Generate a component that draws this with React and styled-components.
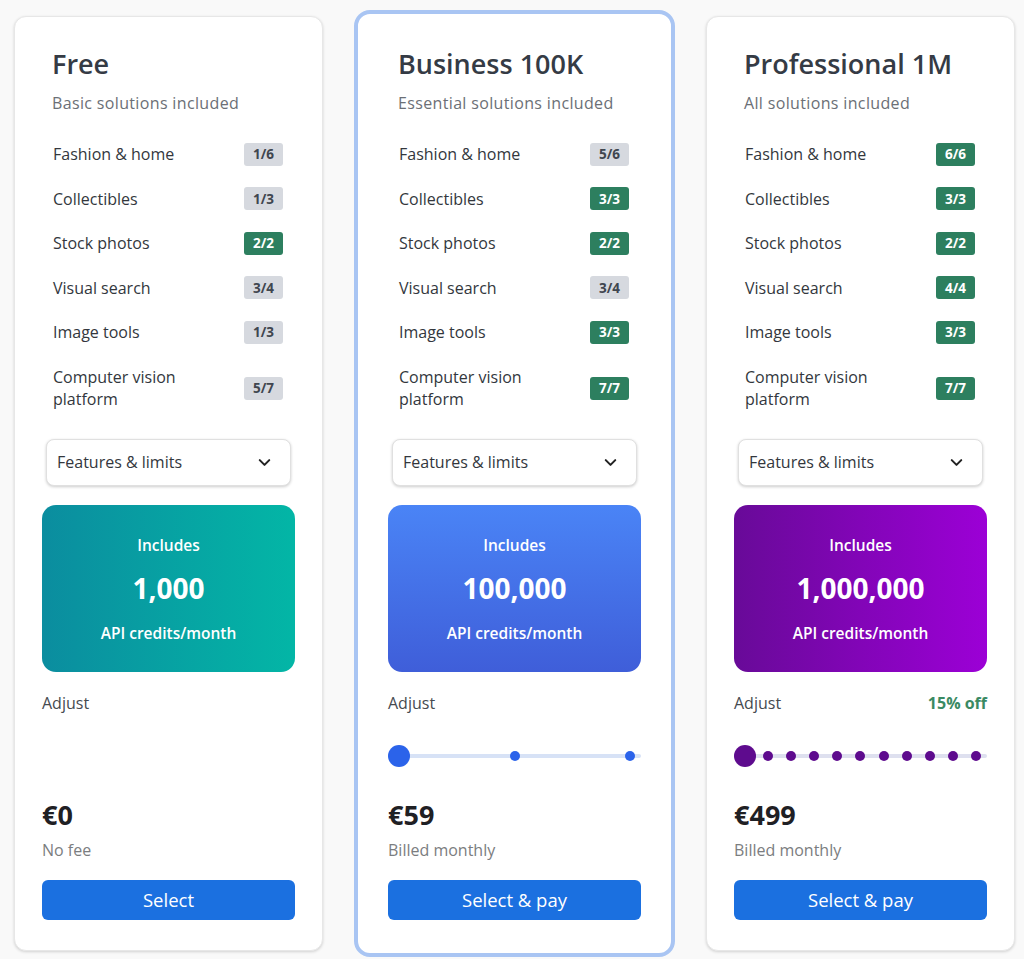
import React from "react";
import styled, { createGlobalStyle } from "styled-components";
import { ChevronDown } from "lucide-react";

const Global = createGlobalStyle`
  html, body { margin: 0; padding: 0; background: #f9f9f9; }
  body { font-family: "Open Sans", "Noto Sans", sans-serif; color: #33373d; }
  * { box-sizing: border-box; }
`;

const Page = styled.div`
  display: grid;
  grid-template-columns: repeat(3, 309px);
  column-gap: 37px;
  padding: 16px 0 10px 14px;
  align-items: stretch;
`;

const Card = styled.div`
  background: #fff;
  border-radius: ${(p) => (p.$selected ? "16px" : "12px")};
  border: ${(p) => (p.$selected ? "4px solid #a9c5f3" : "1px solid #e7e7e7")};
  box-shadow: ${(p) => (p.$selected ? "none" : "0 1px 3px rgba(0,0,0,0.16)")};
  margin: ${(p) => (p.$selected ? "-6px" : "0")};
  padding: ${(p) => (p.$selected ? "31px 30px 33px" : "28px 27px 27px")};
  display: flex;
  flex-direction: column;
`;

const Header = styled.div`
  padding: 1px 10px 0;
`;

const Title = styled.h2`
  margin: 0;
  font-size: 27px;
  line-height: 36px;
  font-weight: 650;
  color: #353b45;
`;

const Subtitle = styled.div`
  margin-top: 10px;
  font-size: 16px;
  line-height: 22px;
  letter-spacing: 0.35px;
  color: #6b6f76;
`;

const Features = styled.ul`
  list-style: none;
  margin: 18px 12px 0 11px;
  padding: 0;
`;

const Feature = styled.li`
  display: flex;
  align-items: center;
  justify-content: space-between;
  gap: 16px;
  padding: 11px 0;
  font-size: 16px;
  line-height: 22.5px;
  font-weight: 500;
  color: #33373d;
  &:not(:last-child) {
    height: 44.5px;
  }
`;

const FeatureName = styled.span`
  max-width: ${(p) => (p.$wrap ? "150px" : "none")};
`;

const Badge = styled.span`
  flex: none;
  width: 39px;
  height: 23px;
  border-radius: 3px;
  display: flex;
  align-items: center;
  justify-content: center;
  font-size: 13.5px;
  font-weight: 700;
  background: ${(p) => (p.$full ? "#2d7f5f" : "#d6d9df")};
  color: ${(p) => (p.$full ? "#fff" : "#40464f")};
`;

const Dropdown = styled.button`
  margin: 17px 4px 0;
  height: 47px;
  display: flex;
  align-items: center;
  justify-content: space-between;
  padding: 0 16px 0 10px;
  background: #fff;
  border: 1px solid #e0e0e0;
  border-radius: 8px;
  box-shadow: 0 1px 3px rgba(0, 0, 0, 0.2);
  font-family: inherit;
  font-size: 16px;
  font-weight: 500;
  color: #33373d;
  cursor: pointer;
`;

const Credits = styled.div`
  margin-top: 19px;
  height: 167px;
  border-radius: 14px;
  background: ${(p) => p.$bg};
  color: #fff;
  display: flex;
  flex-direction: column;
  align-items: center;
  padding-top: 29px;
`;

const CreditsLabel = styled.div`
  margin-top: ${(p) => p.$gap || 0}px;
  font-size: 15.5px;
  line-height: 22px;
  font-weight: 600;
`;

const CreditsNumber = styled.div`
  margin-top: 14px;
  font-size: 28px;
  line-height: 36px;
  font-weight: 700;
`;

const AdjustRow = styled.div`
  margin-top: 20px;
  display: flex;
  justify-content: space-between;
  align-items: center;
  font-size: 16px;
  line-height: 22px;
  color: #464a50;
`;

const Discount = styled.span`
  color: #3a8a63;
  font-weight: 700;
`;

const SliderArea = styled.div`
  margin-top: 22px;
  height: 40px;
  display: flex;
  align-items: center;
`;

const Track = styled.div`
  position: relative;
  flex: 1;
  height: 22px;
  display: flex;
  justify-content: space-between;
  align-items: center;
  &::before {
    content: "";
    position: absolute;
    left: 0;
    right: 0;
    top: 9px;
    height: 4px;
    border-radius: 2px;
    background: ${(p) => p.$track};
  }
`;

const Stop = styled.span`
  position: relative;
  width: 22px;
  height: 22px;
  display: flex;
  align-items: center;
  justify-content: center;
  &::after {
    content: "";
    width: ${(p) => (p.$thumb ? "22px" : "10px")};
    height: ${(p) => (p.$thumb ? "22px" : "10px")};
    border-radius: 50%;
    background: ${(p) => p.$color};
  }
`;

const Price = styled.div`
  margin-top: 21px;
  font-size: 27px;
  line-height: 36px;
  font-weight: 700;
  color: #1f2024;
`;

const Billing = styled.div`
  margin-top: 6px;
  font-size: 16px;
  line-height: 22px;
  color: #7b7d80;
`;

const SelectButton = styled.button`
  margin-top: 19px;
  height: 40px;
  border: none;
  border-radius: 6px;
  background: #1b70e0;
  color: #fff;
  font-family: inherit;
  font-size: 18.5px;
  font-weight: 500;
  cursor: pointer;
`;

const plans = [
  {
    name: "Free",
    subtitle: "Basic solutions included",
    features: ["1/6", "1/3", "2/2", "3/4", "1/3", "5/7"],
    credits: "1,000",
    bg: "linear-gradient(90deg, #0b8d9f 0%, #03b6a6 100%)",
    slider: null,
    price: "€0",
    billing: "No fee",
    button: "Select",
  },
  {
    name: "Business 100K",
    subtitle: "Essential solutions included",
    features: ["5/6", "3/3", "2/2", "3/4", "3/3", "7/7"],
    credits: "100,000",
    bg: "linear-gradient(180deg, #4a84f6 0%, #3f5ed9 100%)",
    slider: { stops: 3, color: "#2b63ea", track: "#d7e2f6" },
    price: "€59",
    billing: "Billed monthly",
    button: "Select & pay",
    selected: true,
  },
  {
    name: "Professional 1M",
    subtitle: "All solutions included",
    features: ["6/6", "3/3", "2/2", "4/4", "3/3", "7/7"],
    credits: "1,000,000",
    bg: "linear-gradient(90deg, #680a98 0%, #9c00d6 100%)",
    slider: { stops: 11, color: "#5e0b8e", track: "#dee0ef" },
    discount: "15% off",
    price: "€499",
    billing: "Billed monthly",
    button: "Select & pay",
  },
];

const featureNames = [
  "Fashion & home",
  "Collectibles",
  "Stock photos",
  "Visual search",
  "Image tools",
  "Computer vision platform",
];

const isFull = (v) => {
  const [a, b] = v.split("/");
  return a === b;
};

function PlanCard({ plan }) {
  return (
    <Card $selected={plan.selected}>
      <Header>
        <Title>{plan.name}</Title>
        <Subtitle>{plan.subtitle}</Subtitle>
      </Header>
      <Features>
        {featureNames.map((n, i) => (
          <Feature key={n}>
            <FeatureName $wrap={i === 5}>{n}</FeatureName>
            <Badge $full={isFull(plan.features[i])}>{plan.features[i]}</Badge>
          </Feature>
        ))}
      </Features>
      <Dropdown type="button">
        Features &amp; limits
        <ChevronDown size={19} strokeWidth={2.6} color="#222" />
      </Dropdown>
      <Credits $bg={plan.bg}>
        <CreditsLabel>Includes</CreditsLabel>
        <CreditsNumber>{plan.credits}</CreditsNumber>
        <CreditsLabel $gap={16}>API credits/month</CreditsLabel>
      </Credits>
      <AdjustRow>
        <span>Adjust</span>
        {plan.discount && <Discount>{plan.discount}</Discount>}
      </AdjustRow>
      <SliderArea>
        {plan.slider && (
          <Track $track={plan.slider.track}>
            {Array.from({ length: plan.slider.stops }).map((_, i) => (
              <Stop key={i} $thumb={i === 0} $color={plan.slider.color} />
            ))}
          </Track>
        )}
      </SliderArea>
      <Price>{plan.price}</Price>
      <Billing>{plan.billing}</Billing>
      <SelectButton type="button">{plan.button}</SelectButton>
    </Card>
  );
}

export default function App() {
  return (
    <>
      <Global />
      <Page>
        {plans.map((p) => (
          <PlanCard key={p.name} plan={p} />
        ))}
      </Page>
    </>
  );
}
